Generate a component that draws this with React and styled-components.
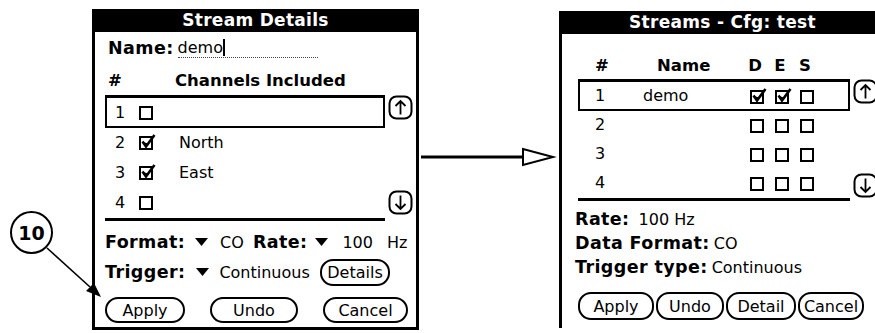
import React from "react";
import styled, { createGlobalStyle } from "styled-components";

const GlobalStyle = createGlobalStyle`
  html, body { margin: 0; padding: 0; background: #fff; }
  body { font-family: "DejaVu Sans", "Liberation Sans", sans-serif; color: #000; }
  * { box-sizing: border-box; }
`;

const Stage = styled.div`
  position: relative;
  width: 875px;
  height: 333px;
  overflow: hidden;
  display: flex;
  align-items: flex-start;
  background: #fff;
`;

const Gutter = styled.div`
  flex: none;
  width: ${(p) => p.$w}px;
`;

const Screen = styled.div`
  flex: none;
  width: 327px;
  height: ${(p) => p.$h}px;
  margin-top: ${(p) => p.$top}px;
  border: 3px solid #000;
  border-top: none;
  border-bottom-width: ${(p) => (p.$open ? 0 : 3)}px;
  display: flex;
  flex-direction: column;
`;

const TitleBar = styled.div`
  margin: 0 -3px;
  height: 23px;
  background: #000;
  color: #fff;
  font-weight: bold;
  font-size: 17px;
  line-height: 23px;
  text-align: center;
  letter-spacing: 0.3px;
`;

const Bold = styled.span`
  font-weight: bold;
  font-size: 17.5px;
  letter-spacing: 0.4px;
  white-space: nowrap;
  margin-left: ${(p) => p.$ml || 0}px;
`;

const Text = styled.span`
  font-size: 16px;
  white-space: nowrap;
  margin-left: ${(p) => p.$ml || 0}px;
`;

/* ---- left form ---- */

const NameRow = styled.div`
  display: flex;
  align-items: center;
  height: 22px;
  margin-top: 5px;
  padding-left: 13px;
`;

const Field = styled.span`
  display: inline-flex;
  align-items: center;
  width: 140px;
  height: 20px;
  margin-left: 4px;
  border-bottom: 1px dotted #444;
`;

const Caret = styled.span`
  display: inline-block;
  width: 2px;
  height: 17px;
  background: #000;
`;

const HeadRow = styled.div`
  display: grid;
  grid-template-columns: ${(p) => p.$cols};
  align-items: center;
  height: 22px;
  margin-top: ${(p) => p.$mt}px;
  padding-left: ${(p) => p.$pl}px;
`;

const HeadCell = styled(Bold)`
  font-size: 16.5px;
  letter-spacing: 0;
  padding-left: ${(p) => p.$pl || 0}px;
  text-align: ${(p) => (p.$center ? "center" : "left")};
  width: ${(p) => (p.$center ? "14px" : "auto")};
`;

const ListArea = styled.div`
  display: flex;
  margin-top: ${(p) => p.$mt}px;
  padding-left: ${(p) => p.$pl}px;
`;

const List = styled.div`
  width: ${(p) => p.$w}px;
  border-top: 3px solid #000;
  border-bottom: 3px solid #000;
`;

const ListRow = styled.div`
  display: grid;
  grid-template-columns: ${(p) => p.$cols};
  align-items: center;
  height: ${(p) => p.$h}px;
  border: 2px solid ${(p) => (p.$selected ? "#000" : "transparent")};
  border-top: none;
`;

const Cell = styled.span`
  font-size: 16px;
  padding-left: ${(p) => p.$pl || 0}px;
  display: flex;
  align-items: center;
`;

const ScrollCol = styled.div`
  display: flex;
  flex-direction: column;
  justify-content: space-between;
  margin-left: ${(p) => p.$ml}px;
  padding-bottom: ${(p) => p.$pb}px;
`;

const ControlRow = styled.div`
  display: flex;
  align-items: center;
  height: ${(p) => p.$h}px;
  margin-top: ${(p) => p.$mt}px;
  padding: 0 ${(p) => p.$pr || 0}px 0 ${(p) => p.$pl}px;
`;

const PopTrigger = styled.svg`
  flex: none;
  margin-left: ${(p) => p.$ml}px;
`;

const ButtonRow = styled.div`
  display: flex;
  justify-content: ${(p) => (p.$tight ? "flex-start" : "space-between")};
  gap: ${(p) => (p.$tight ? 2 : 0)}px;
  margin-top: ${(p) => p.$mt}px;
  padding: 0 ${(p) => p.$pr || 0}px 0 ${(p) => p.$pl}px;
`;

const PalmButton = styled.div`
  flex: none;
  width: ${(p) => p.$w}px;
  height: ${(p) => p.$h || 26}px;
  margin-left: ${(p) => (p.$push ? "auto" : "0")};
  border: 2px solid #000;
  border-radius: 13px;
  display: flex;
  align-items: center;
  justify-content: center;
  font-size: 16px;
  background: #fff;
`;

/* ---- right form ---- */

const InfoBlock = styled.div`
  display: flex;
  flex-direction: column;
  margin-top: 6px;
  padding-left: 13px;
`;

const InfoLine = styled.div`
  height: 24px;
  display: flex;
  align-items: center;
`;

/* ---- annotations ---- */

const Connector = styled.svg`
  flex: none;
  margin-top: 147px;
`;

const Callout = styled.div`
  position: absolute;
  left: 0;
  top: 0;
  width: 120px;
  height: 333px;
  pointer-events: none;
`;

const Bubble = styled.div`
  position: absolute;
  left: 10px;
  top: 211px;
  width: 43px;
  height: 43px;
  border: 2.5px solid #000;
  border-radius: 50%;
  display: flex;
  align-items: center;
  justify-content: center;
  font-weight: bold;
  font-size: 19px;
  background: #fff;
`;

const Leader = styled.svg`
  position: absolute;
  left: 0;
  top: 0;
`;

const Check = ({ checked }) => (
  <svg width="20" height="18" viewBox="0 0 20 18">
    <rect x="1" y="4" width="12" height="12" fill="none" stroke="#000" strokeWidth="2" shapeRendering="crispEdges" />
    {checked && (
      <>
        <path d="M3.5 8.5 L7 13.5 L15.5 2" fill="none" stroke="#000" strokeWidth="2.6" strokeLinejoin="miter" />
        <path d="M4 9 L7 13.5 L9 10.5 Z" fill="#000" />
      </>
    )}
  </svg>
);

const ScrollArrow = ({ dir }) => (
  <svg width="25" height="25" viewBox="0 0 25 25">
    <rect x="1.5" y="1.5" width="22" height="22" rx="7" fill="#fff" stroke="#000" strokeWidth="2" />
    {dir === "up" ? (
      <path d="M12.5 19.5 V6 M7.5 11 L12.5 6 L17.5 11" fill="none" stroke="#000" strokeWidth="1.8" />
    ) : (
      <path d="M12.5 5.5 V19 M7.5 14 L12.5 19 L17.5 14" fill="none" stroke="#000" strokeWidth="1.8" />
    )}
  </svg>
);

const Pop = ({ ml }) => (
  <PopTrigger $ml={ml} width="13" height="8" viewBox="0 0 13 8">
    <path d="M0 0 H13 L6.5 8 Z" fill="#000" />
  </PopTrigger>
);

const channels = [
  { n: 1, on: false, name: "" },
  { n: 2, on: true, name: "North" },
  { n: 3, on: true, name: "East" },
  { n: 4, on: false, name: "" },
];

const streams = [
  { n: 1, name: "demo", d: true, e: true, s: false },
  { n: 2, name: "", d: false, e: false, s: false },
  { n: 3, name: "", d: false, e: false, s: false },
  { n: 4, name: "", d: false, e: false, s: false },
];

const streamCols = "60px 110px 25px 25px 25px";

export default function App() {
  return (
    <>
      <GlobalStyle />
      <Stage>
        <Gutter $w={92} />

        <Screen $top={9} $h={321}>
          <TitleBar>Stream Details</TitleBar>
          <NameRow>
            <Bold>Name:</Bold>
            <Field>
              <Text>demo</Text>
              <Caret />
            </Field>
          </NameRow>
          <HeadRow $cols="67px auto" $mt={10} $pl={13}>
            <HeadCell>#</HeadCell>
            <HeadCell>Channels Included</HeadCell>
          </HeadRow>
          <ListArea $mt={4} $pl={10}>
            <List $w={280}>
              {channels.map((c) => (
                <ListRow key={c.n} $cols="32px 40px auto" $h={30} $selected={c.n === 1}>
                  <Cell $pl={8}>{c.n}</Cell>
                  <Cell>
                    <Check checked={c.on} />
                  </Cell>
                  <Cell>{c.name}</Cell>
                </ListRow>
              ))}
            </List>
            <ScrollCol $ml={3} $pb={6}>
              <ScrollArrow dir="up" />
              <ScrollArrow dir="down" />
            </ScrollCol>
          </ListArea>
          <ControlRow $h={22} $mt={10} $pl={10}>
            <Bold>Format:</Bold>
            <Pop ml={10} />
            <Text $ml={12}>CO</Text>
            <Bold $ml={9}>Rate:</Bold>
            <Pop ml={8} />
            <Text $ml={14}>100</Text>
            <Text $ml={14}>Hz</Text>
          </ControlRow>
          <ControlRow $h={26} $mt={6} $pl={10} $pr={26}>
            <Bold>Trigger:</Bold>
            <Pop ml={11} />
            <Text $ml={10}>Continuous</Text>
            <PalmButton $w={70} $h={27} $push>Details</PalmButton>
          </ControlRow>
          <ButtonRow $mt={12} $pl={10} $pr={8}>
            <PalmButton $w={80}>Apply</PalmButton>
            <PalmButton $w={88}>Undo</PalmButton>
            <PalmButton $w={85}>Cancel</PalmButton>
          </ButtonRow>
        </Screen>

        <Connector width="140" height="20" viewBox="0 0 140 20">
          <line x1="2" y1="10" x2="104" y2="10" stroke="#000" strokeWidth="3" />
          <path d="M104 2 L134 10 L104 18 Z" fill="#fff" stroke="#000" strokeWidth="2" />
        </Connector>

        <Screen $top={11} $h={317} $open>
          <TitleBar>Streams - Cfg: test</TitleBar>
          <HeadRow $cols={streamCols} $mt={20} $pl={16}>
            <HeadCell $pl={17}>#</HeadCell>
            <HeadCell $pl={19}>Name</HeadCell>
            <HeadCell $center>D</HeadCell>
            <HeadCell $center>E</HeadCell>
            <HeadCell $center>S</HeadCell>
          </HeadRow>
          <ListArea $mt={3} $pl={16}>
            <List $w={272}>
              {streams.map((s) => (
                <ListRow key={s.n} $cols={streamCols} $h={29} $selected={s.n === 1}>
                  <Cell $pl={15}>{s.n}</Cell>
                  <Cell $pl={3}>{s.name}</Cell>
                  <Cell>
                    <Check checked={s.d} />
                  </Cell>
                  <Cell>
                    <Check checked={s.e} />
                  </Cell>
                  <Cell>
                    <Check checked={s.s} />
                  </Cell>
                </ListRow>
              ))}
            </List>
            <ScrollCol $ml={3} $pb={3}>
              <ScrollArrow dir="up" />
              <ScrollArrow dir="down" />
            </ScrollCol>
          </ListArea>
          <InfoBlock>
            <InfoLine>
              <Bold>Rate:</Bold>
              <Text $ml={9}>100 Hz</Text>
            </InfoLine>
            <InfoLine>
              <Bold>Data Format:</Bold>
              <Text $ml={4}>CO</Text>
            </InfoLine>
            <InfoLine>
              <Bold>Trigger type:</Bold>
              <Text $ml={4}>Continuous</Text>
            </InfoLine>
          </InfoBlock>
          <ButtonRow $tight $mt={13} $pl={16}>
            <PalmButton $w={76} $h={28}>Apply</PalmButton>
            <PalmButton $w={68} $h={28}>Undo</PalmButton>
            <PalmButton $w={70} $h={28}>Detail</PalmButton>
            <PalmButton $w={66} $h={28}>Cancel</PalmButton>
          </ButtonRow>
        </Screen>

        <Callout>
          <Leader width="120" height="333" viewBox="0 0 120 333">
            <line x1="47" y1="248" x2="90" y2="287" stroke="#000" strokeWidth="1.6" />
            <path d="M101 297 L86 291 L94 283 Z" fill="#000" />
          </Leader>
          <Bubble>10</Bubble>
        </Callout>
      </Stage>
    </>
  );
}
